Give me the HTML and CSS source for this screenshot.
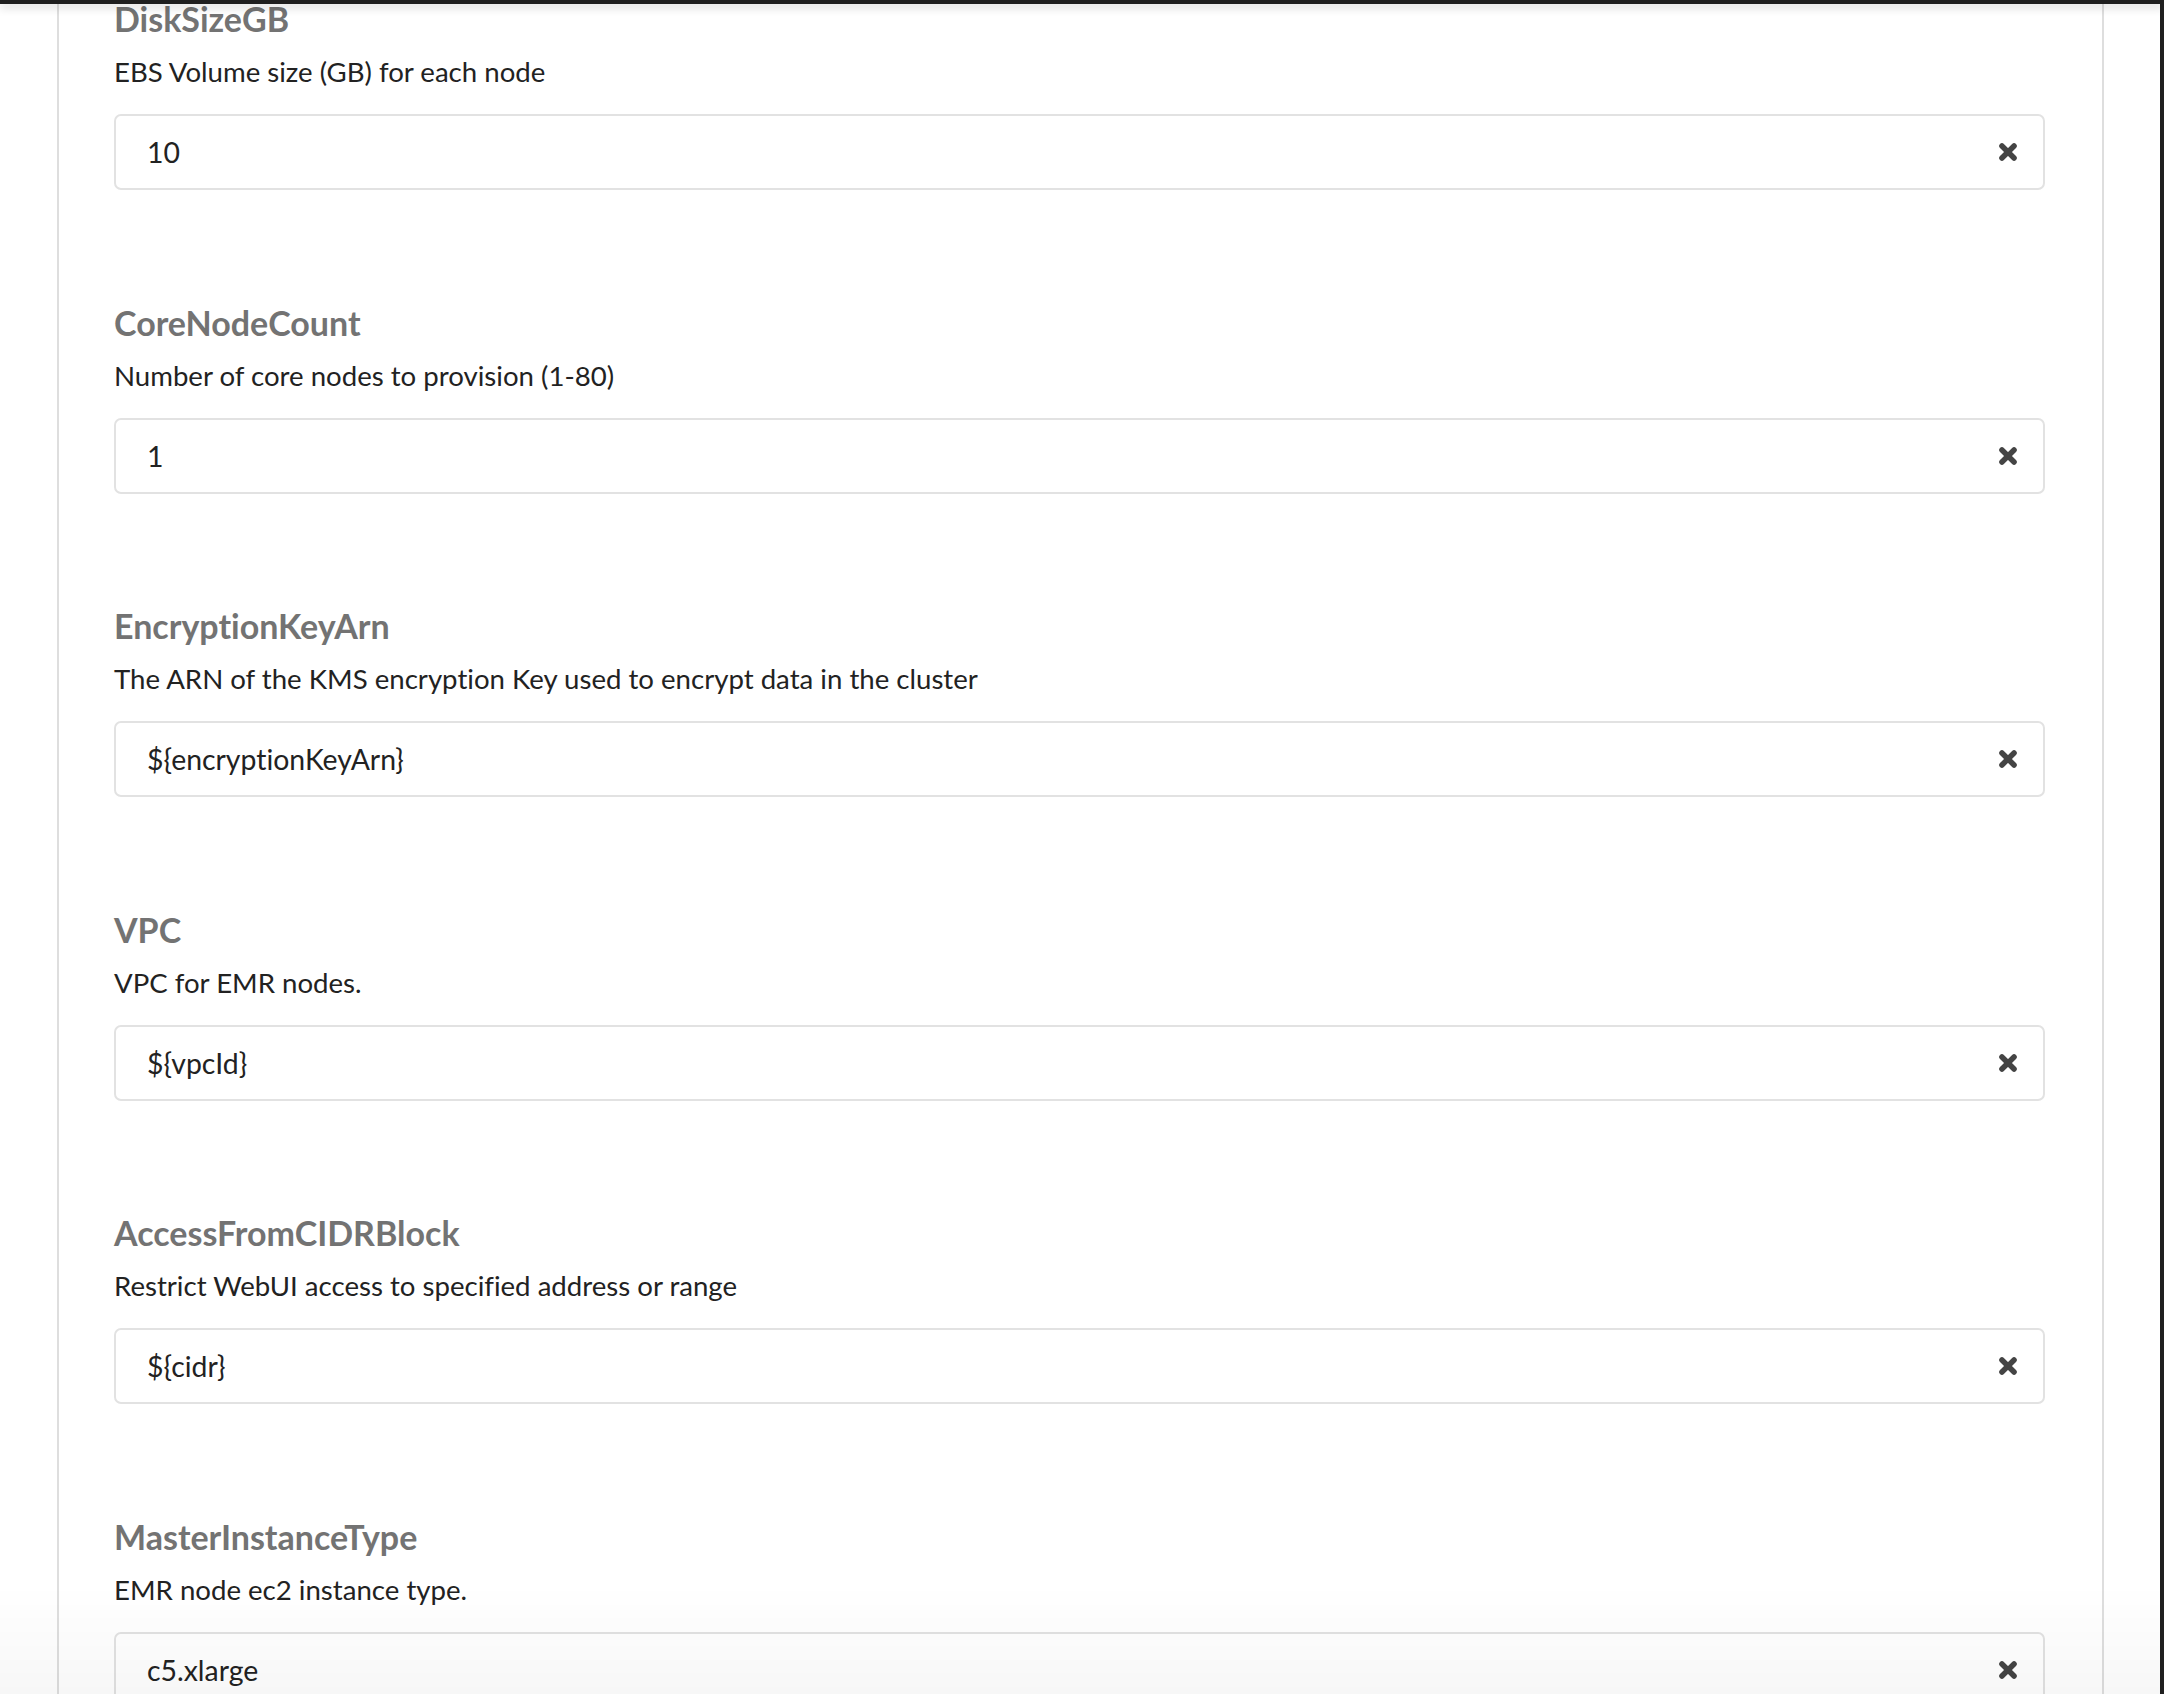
FILE: index.html
```html
<!DOCTYPE html>
<html>
<head>
<meta charset="utf-8">
<link rel="stylesheet" href="styles.css">
</head>
<body>
<div class="frame-top"></div>
<div class="frame-right"></div>
<div class="fade-bottom"></div>
<div class="page">
  <div class="panel">
    <div class="field">
      <div class="title">DiskSizeGB</div>
      <div class="desc">EBS Volume size (GB) for each node</div>
      <div class="input"><span class="value">10</span><svg class="clear" viewBox="0 0 20 20"><path d="M4.5 4.5 L15.5 15.5 M15.5 4.5 L4.5 15.5"/></svg></div>
    </div>
    <div class="field">
      <div class="title">CoreNodeCount</div>
      <div class="desc">Number of core nodes to provision (1-80)</div>
      <div class="input"><span class="value">1</span><svg class="clear" viewBox="0 0 20 20"><path d="M4.5 4.5 L15.5 15.5 M15.5 4.5 L4.5 15.5"/></svg></div>
    </div>
    <div class="field">
      <div class="title">EncryptionKeyArn</div>
      <div class="desc">The ARN of the KMS encryption Key used to encrypt data in the cluster</div>
      <div class="input"><span class="value">${encryptionKeyArn}</span><svg class="clear" viewBox="0 0 20 20"><path d="M4.5 4.5 L15.5 15.5 M15.5 4.5 L4.5 15.5"/></svg></div>
    </div>
    <div class="field">
      <div class="title">VPC</div>
      <div class="desc">VPC for EMR nodes.</div>
      <div class="input"><span class="value">${vpcId}</span><svg class="clear" viewBox="0 0 20 20"><path d="M4.5 4.5 L15.5 15.5 M15.5 4.5 L4.5 15.5"/></svg></div>
    </div>
    <div class="field">
      <div class="title">AccessFromCIDRBlock</div>
      <div class="desc">Restrict WebUI access to specified address or range</div>
      <div class="input"><span class="value">${cidr}</span><svg class="clear" viewBox="0 0 20 20"><path d="M4.5 4.5 L15.5 15.5 M15.5 4.5 L4.5 15.5"/></svg></div>
    </div>
    <div class="field">
      <div class="title">MasterInstanceType</div>
      <div class="desc">EMR node ec2 instance type.</div>
      <div class="input"><span class="value">c5.xlarge</span><svg class="clear" viewBox="0 0 20 20"><path d="M4.5 4.5 L15.5 15.5 M15.5 4.5 L4.5 15.5"/></svg></div>
    </div>
  </div>
</div>
</body>
</html>
```
FILE: styles.css
```css
html, body {
  margin: 0;
  padding: 0;
  background: #ffffff;
  overflow: hidden;
  height: 100%;
}
body {
  font-family: Lato, "Open Sans", "Liberation Sans", sans-serif;
  font-variant-ligatures: none;
}
.frame-top {
  position: fixed;
  left: 0;
  top: 0;
  right: 0;
  height: 4px;
  background: #1f1f1f;
  box-shadow: 0 3px 10px rgba(0, 0, 0, 0.22);
  z-index: 10;
}
.frame-right {
  position: fixed;
  top: 0;
  right: 0;
  bottom: 0;
  width: 4px;
  background: #1f1f1f;
  z-index: 11;
}
.fade-bottom {
  position: fixed;
  left: 0;
  right: 0;
  bottom: 0;
  height: 110px;
  background: linear-gradient(to top, rgba(0, 0, 0, 0.03), rgba(0, 0, 0, 0));
  z-index: 9;
  pointer-events: none;
}
.page {
  padding-left: 57px;
  height: 100%;
}
.panel {
  width: 2047px;
  min-height: 100%;
  border-left: 2px solid #dedede;
  border-right: 2px solid #dedede;
  padding: 0 57px 0 55px;
  box-sizing: border-box;
  margin-top: -1px;
}
.field {
  display: flex;
  flex-direction: column;
  margin-bottom: 112.6px;
}
.title {
  font-size: 34px;
  font-weight: 700;
  color: #737373;
  line-height: 40px;
  letter-spacing: 0;
}
.desc {
  margin-top: 15px;
  font-size: 27.6px;
  color: #222222;
  line-height: 36px;
}
.input {
  margin-top: 24px;
  height: 76px;
  border: 2px solid #e2e2e2;
  border-radius: 7px;
  box-sizing: border-box;
  display: flex;
  align-items: center;
  justify-content: space-between;
  padding: 0 24px 0 31px;
  background: #ffffff;
}
.value {
  font-size: 28.4px;
  color: #222222;
}
.clear {
  width: 22px;
  height: 22px;
}
.clear path {
  stroke: #444444;
  stroke-width: 5;
  stroke-linecap: round;
  fill: none;
}
```
